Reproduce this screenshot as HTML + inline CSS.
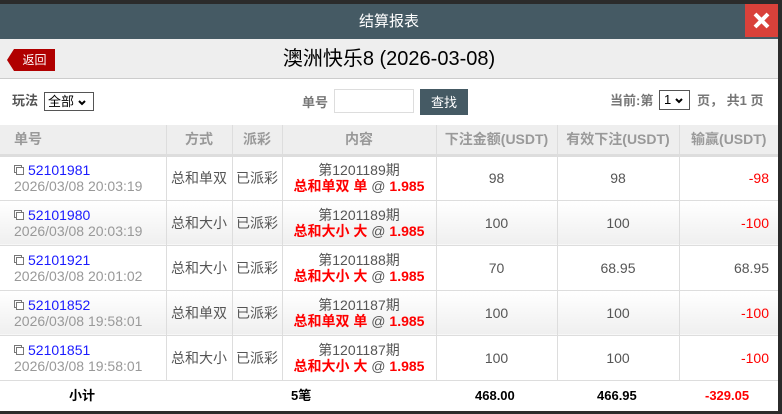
<!DOCTYPE html>
<html><head><meta charset="utf-8"><style>
*{margin:0;padding:0;box-sizing:border-box}
body{width:782px;height:414px;background:#2b2b2b;position:relative;overflow:hidden;font-family:"Liberation Sans","Noto Sans CJK SC",sans-serif;font-size:13px;color:#555}
.m{position:absolute;left:0;top:4px;width:778px;height:407px;background:#fff}
.hd{position:absolute;left:0;top:0;width:778px;height:35px;background:#455a64;color:#fff;font-size:15px;text-align:center;line-height:35px}
.x{position:absolute;right:0;top:0;width:33px;height:33px;background:#d9413a}
.tb{position:absolute;left:0;top:35px;width:778px;height:40px;background:#eee;border-bottom:1px solid #ccc;text-align:center;font-size:20px;color:#000;line-height:40px}
.back{position:absolute;left:14px;top:10px;height:22px;width:41px;background:#b00000;color:#fff;font-size:12px;line-height:22px;text-align:center}
.back:before{content:"";position:absolute;left:-7px;top:0;border-right:7px solid #b00000;border-top:11px solid transparent;border-bottom:11px solid transparent}
.a{position:absolute;line-height:16px}
table{position:absolute;left:0;top:121px;width:778px;border-collapse:collapse}
th{background:#eee;color:#999;font-weight:bold;font-size:14px;height:30px;border-left:1px solid #ddd;border-bottom:3px solid #ddd}
td{height:45px;border-left:1px solid #ddd;border-bottom:1px solid #ddd;text-align:center;font-size:14px;color:#555;line-height:16px}
tr.g td{background:linear-gradient(#fff,#efefef)}
th:first-child,td:first-child{border-left:none}
td.o{text-align:left;padding-left:14px}
.id{color:#1a1aff}
.dt{color:#999}
.r{color:#f00;font-weight:bold}
.n{color:#f00}
.ft{position:absolute;top:384px;font-weight:bold;color:#000;font-size:13px;line-height:16px}
</style></head><body>
<div class="m">
<div class="hd">结算报表<div class="x"><svg width="33" height="33"><path d="M10 10L23 23M23 10L10 23" stroke="#fff" stroke-width="4"/></svg></div></div>
<div class="tb"><div class="back">返回</div>澳洲快乐8 (2026-03-08)</div>
<div class="a" style="left:12px;top:89px;font-weight:bold;color:#555">玩法</div>
<div class="a" style="left:44px;top:88px;width:50px;height:19px;border:1px solid #555;color:#000;padding-left:3px;line-height:17px;font-size:13px">全部 <svg width="8" height="6"><path d="M1 1L4 4L7 1" stroke="#000" stroke-width="2" fill="none"/></svg></div>
<div class="a" style="left:302px;top:91px;font-weight:bold;color:#777">单号</div>
<div class="a" style="left:334px;top:85px;width:80px;height:24px;border:1px solid #ddd"></div>
<div class="a" style="left:420px;top:85px;width:48px;height:26px;background:#455a64;color:#fff;text-align:center;line-height:27px;font-size:13px">查找</div>
<div class="a" style="left:610px;top:89px;font-weight:bold;color:#777">当前:第</div>
<div class="a" style="left:659px;top:86px;width:31px;height:20px;border:1px solid #555;color:#000;padding-left:4px;line-height:18px;font-size:13px">1 <svg width="8" height="6"><path d="M1 1L4 4L7 1" stroke="#000" stroke-width="2" fill="none"/></svg></div>
<div class="a" style="left:697px;top:89px;font-weight:bold;color:#777">页， 共1 页</div>
<table>
<tr><th style="width:166px;text-align:left;padding-left:14px">单号</th><th style="width:66px">方式</th><th style="width:50px">派彩</th><th style="width:154px">内容</th><th style="width:121px">下注金额(USDT)</th><th style="width:122px">有效下注(USDT)</th><th style="width:99px">输赢(USDT)</th></tr>
<tr><td class="o"><svg width="10" height="10" style="margin-right:4px"><rect x="0.5" y="0.5" width="7" height="7" fill="#fff" stroke="#777"/><rect x="2.5" y="2.5" width="7" height="7" fill="#fff" stroke="#777"/></svg><span class="id">52101981</span><br><span class="dt">2026/03/08 20:03:19</span></td><td>总和单双</td><td>已派彩</td><td>第1201189期<br><span class="r">总和单双 单</span> @ <span class="r">1.985</span></td><td>98</td><td>98</td><td class="n" style="text-align:right;padding-right:9px">-98</td></tr>
<tr class="g"><td class="o"><svg width="10" height="10" style="margin-right:4px"><rect x="0.5" y="0.5" width="7" height="7" fill="#fff" stroke="#777"/><rect x="2.5" y="2.5" width="7" height="7" fill="#fff" stroke="#777"/></svg><span class="id">52101980</span><br><span class="dt">2026/03/08 20:03:19</span></td><td>总和大小</td><td>已派彩</td><td>第1201189期<br><span class="r">总和大小 大</span> @ <span class="r">1.985</span></td><td>100</td><td>100</td><td class="n" style="text-align:right;padding-right:9px">-100</td></tr>
<tr><td class="o"><svg width="10" height="10" style="margin-right:4px"><rect x="0.5" y="0.5" width="7" height="7" fill="#fff" stroke="#777"/><rect x="2.5" y="2.5" width="7" height="7" fill="#fff" stroke="#777"/></svg><span class="id">52101921</span><br><span class="dt">2026/03/08 20:01:02</span></td><td>总和大小</td><td>已派彩</td><td>第1201188期<br><span class="r">总和大小 大</span> @ <span class="r">1.985</span></td><td>70</td><td>68.95</td><td style="text-align:right;padding-right:9px">68.95</td></tr>
<tr class="g"><td class="o"><svg width="10" height="10" style="margin-right:4px"><rect x="0.5" y="0.5" width="7" height="7" fill="#fff" stroke="#777"/><rect x="2.5" y="2.5" width="7" height="7" fill="#fff" stroke="#777"/></svg><span class="id">52101852</span><br><span class="dt">2026/03/08 19:58:01</span></td><td>总和单双</td><td>已派彩</td><td>第1201187期<br><span class="r">总和单双 单</span> @ <span class="r">1.985</span></td><td>100</td><td>100</td><td class="n" style="text-align:right;padding-right:9px">-100</td></tr>
<tr><td class="o"><svg width="10" height="10" style="margin-right:4px"><rect x="0.5" y="0.5" width="7" height="7" fill="#fff" stroke="#777"/><rect x="2.5" y="2.5" width="7" height="7" fill="#fff" stroke="#777"/></svg><span class="id">52101851</span><br><span class="dt">2026/03/08 19:58:01</span></td><td>总和大小</td><td>已派彩</td><td>第1201187期<br><span class="r">总和大小 大</span> @ <span class="r">1.985</span></td><td>100</td><td>100</td><td class="n" style="text-align:right;padding-right:9px">-100</td></tr>
</table>
<div class="ft" style="left:69px">小计</div>
<div class="ft" style="left:291px">5笔</div>
<div class="ft" style="left:475px">468.00</div>
<div class="ft" style="left:597px">466.95</div>
<div class="ft" style="left:705px;color:#f00">-329.05</div>
</div>
</body></html>
